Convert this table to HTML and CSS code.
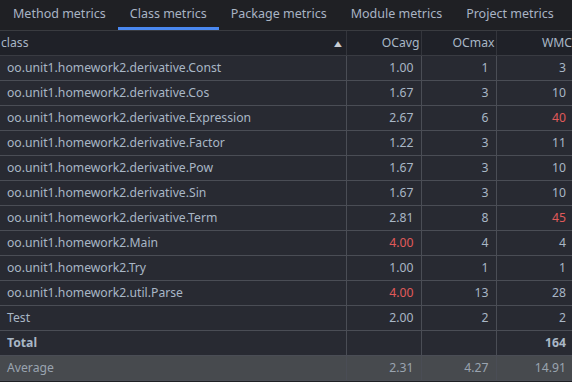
FILE: index.html
```html
<!DOCTYPE html>
<html lang="en">
  <head>
    <meta charset="UTF-8" />
    <title>Class metrics</title>
    <link rel="stylesheet" href="styles.css">
  </head>
  <body>
    <div class="tabs">
      <div class="tab">Method metrics</div>
      <div class="tab active">Class metrics</div>
      <div class="tab">Package metrics</div>
      <div class="tab">Module metrics</div>
      <div class="tab">Project metrics</div>
    </div>

    <table class="metrics">
      <thead>
        <tr>
          <th class="name">class<span class="sort">&#9650;</span></th>
          <th>OCavg</th>
          <th>OCmax</th>
          <th>WMC</th>
        </tr>
      </thead>
      <tbody>
        <tr><td class="name">oo.unit1.homework2.derivative.Const</td><td>1.00</td><td>1</td><td>3</td></tr>
        <tr><td class="name">oo.unit1.homework2.derivative.Cos</td><td>1.67</td><td>3</td><td>10</td></tr>
        <tr><td class="name">oo.unit1.homework2.derivative.Expression</td><td>2.67</td><td>6</td><td class="warn">40</td></tr>
        <tr><td class="name">oo.unit1.homework2.derivative.Factor</td><td>1.22</td><td>3</td><td>11</td></tr>
        <tr><td class="name">oo.unit1.homework2.derivative.Pow</td><td>1.67</td><td>3</td><td>10</td></tr>
        <tr><td class="name">oo.unit1.homework2.derivative.Sin</td><td>1.67</td><td>3</td><td>10</td></tr>
        <tr><td class="name">oo.unit1.homework2.derivative.Term</td><td>2.81</td><td>8</td><td class="warn">45</td></tr>
        <tr><td class="name">oo.unit1.homework2.Main</td><td class="warn">4.00</td><td>4</td><td>4</td></tr>
        <tr><td class="name">oo.unit1.homework2.Try</td><td>1.00</td><td>1</td><td>1</td></tr>
        <tr><td class="name">oo.unit1.homework2.util.Parse</td><td class="warn">4.00</td><td>13</td><td>28</td></tr>
        <tr><td class="name">Test</td><td>2.00</td><td>2</td><td>2</td></tr>
        <tr class="total"><td class="name">Total</td><td></td><td></td><td>164</td></tr>
        <tr class="average"><td class="name">Average</td><td>2.31</td><td>4.27</td><td>14.91</td></tr>
      </tbody>
    </table>
  </body>
</html>
```

FILE: styles.css
```css
* {
  margin: 0;
  padding: 0;
  box-sizing: border-box;
}

body {
  background: #1f2024;
  color: #a9b7c6;
  font-family: "Noto Sans", "Open Sans", sans-serif;
  font-size: 12.2px;
  width: 572px;
  height: 382px;
  overflow: hidden;
}

.tabs {
  display: flex;
  height: 31px;
  padding-left: 1px;
  border-bottom: 1px solid #393b40;
}

.tab {
  padding: 0 12px;
  font-size: 12.5px;
  line-height: 28px;
  height: 30px;
  border-bottom: 3px solid transparent;
  white-space: nowrap;
  color: #a9b4c4;
}

.tab.active {
  border-bottom-color: #4a88f0;
}

.metrics {
  border-collapse: collapse;
  table-layout: fixed;
  width: 574px;
}

.metrics th,
.metrics td {
  height: 25px;
  padding: 0 7px 0 6px;
  text-align: right;
  font-weight: normal;
  white-space: nowrap;
  border-right: 1px solid #4a4d55;
  border-bottom: 1px solid #4a4d55;
}

.metrics th {
  height: 24px;
  padding-right: 1px;
  background: #1f2128;
  border-right-color: #33353c;
  border-bottom-color: #393b42;
}

.metrics th.name {
  width: 346px;
  text-align: left;
  padding-left: 1px;
  position: relative;
}

.metrics th:nth-child(2),
.metrics th:nth-child(3) {
  width: 75px;
}

.sort {
  position: absolute;
  right: 3px;
  top: 5px;
  font-size: 10px;
  transform: scaleX(1.3);
  color: #c8ccd2;
}

.metrics td {
  background: #282a32;
}

.metrics td.name {
  text-align: left;
  padding-left: 7px;
}

.warn {
  color: #e05a5a;
}

.total td {
  font-weight: bold;
}

.average td {
  background: #474a4e;
  color: #9aa4b0;
}
```
